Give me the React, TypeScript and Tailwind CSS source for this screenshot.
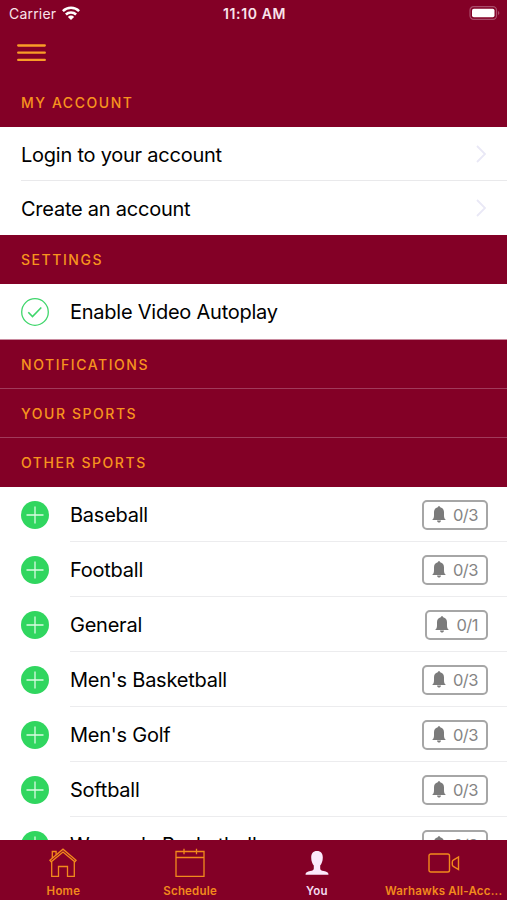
import type { ReactNode } from "react";

interface Sport {
  name: string;
  alerts: string;
}

const sports: Sport[] = [
  { name: "Baseball", alerts: "0/3" },
  { name: "Football", alerts: "0/3" },
  { name: "General", alerts: "0/1" },
  { name: "Men's Basketball", alerts: "0/3" },
  { name: "Men's Golf", alerts: "0/3" },
  { name: "Softball", alerts: "0/3" },
  { name: "Women's Basketball", alerts: "0/3" },
];

export default function App() {
  return (
    <div className="flex h-[900px] w-[507px] flex-col overflow-hidden bg-[#830026] font-['Inter','Liberation_Sans',sans-serif] text-black">
      <StatusBar />

      <header className="flex h-[51px] shrink-0 items-start pl-[17px] pt-[17px]">
        <button aria-label="Menu">
          <svg width="29" height="18" viewBox="0 0 29 18" fill="none" stroke="#f99d27" strokeWidth="2.3" strokeLinecap="round">
            <path d="M1.200 1.500h26.600M1.200 8.700h26.600M1.200 15.900h26.600" />
          </svg>
        </button>
      </header>

      <main className="min-h-0 flex-1 overflow-hidden">
        <SectionTitle>MY ACCOUNT</SectionTitle>
        <AccountRow label="Login to your account" divider />
        <AccountRow label="Create an account" />

        <SectionTitle>SETTINGS</SectionTitle>
        <div className="flex h-[56px] items-center border-b border-[#c98a9e] bg-white pl-[21px]">
          <CheckIcon />
          <span className="ml-[21px] pt-px text-[20px] tracking-[-0.24px]">Enable Video Autoplay</span>
        </div>

        <SectionTitle line>NOTIFICATIONS</SectionTitle>
        <SectionTitle line>YOUR SPORTS</SectionTitle>
        <SectionTitle>OTHER SPORTS</SectionTitle>
        {sports.map((sport) => (
          <SportRow key={sport.name} sport={sport} />
        ))}
      </main>

      <nav className="grid h-[60px] shrink-0 grid-cols-4 bg-[#830026]">
        <Tab label="Home" icon={<HomeIcon />} />
        <Tab label="Schedule" icon={<CalendarIcon />} />
        <Tab label="You" icon={<PersonIcon />} active />
        <Tab label="Warhawks All-Acc..." icon={<VideoIcon />} />
      </nav>
    </div>
  );
}

function StatusBar() {
  return (
    <div className="grid h-[27px] shrink-0 grid-cols-3 items-center pl-[9px] pr-[7px] text-[14px] text-[#f9e3ea]">
      <div className="flex items-center gap-[6px]">
        <span className="tracking-[0.2px]">Carrier</span>
        <svg className="-mt-[2px]" width="18" height="14" viewBox="0 0 18 14" fill="none" stroke="#fff" strokeWidth="2.5">
          <path d="M.9 5.100a11.400 11.400 0 0 1 16.200 0" />
          <path d="M3.900 8.500a7.200 7.200 0 0 1 10.200 0" />
          <path d="M9 13.900 5.900 10.900a4.200 4.200 0 0 1 6.200 0z" fill="#fff" stroke="none" />
        </svg>
      </div>
      <span className="text-center font-semibold tracking-[0.6px]">11:10 AM</span>
      <svg className="-mt-px justify-self-end" width="31" height="14" viewBox="0 0 31 14">
        <rect x="1" y=".7" width="26.5" height="12.6" rx="3.6" fill="none" stroke="#a94c6b" strokeWidth="1.2" />
        <rect x="3" y="2.700" width="22.500" height="8.600" rx="1.800" fill="#fff" />
        <path d="M29 5v4c1.800-.7 1.800-3.300 0-4z" fill="#a94c6b" />
      </svg>
    </div>
  );
}

function SectionTitle({ children, line }: { children: ReactNode; line?: boolean }) {
  return (
    <h2
      className={`flex h-[49px] items-center border-b pl-[21px] pt-px text-[14px] font-medium tracking-[1.55px] text-[#f7941e] ${
        line ? "border-[#a13a5b]" : "border-[#830026]"
      }`}
    >
      {children}
    </h2>
  );
}

function AccountRow({ label, divider }: { label: string; divider?: boolean }) {
  return (
    <div className="bg-white pl-[21px]">
      <div
        className={`flex h-[54px] items-center justify-between border-b pr-[21px] ${
          divider ? "border-[#e9e9eb]" : "border-white"
        }`}
      >
        <span className="pt-[2px] text-[20px] tracking-[-0.24px]">{label}</span>
        <svg width="10" height="18" viewBox="0 0 10 18" fill="none" stroke="#e9e8f6" strokeWidth="1.8">
          <path d="m1 1 8 8-8 8" />
        </svg>
      </div>
    </div>
  );
}

function SportRow({ sport }: { sport: Sport }) {
  return (
    <div className="flex h-[55px] items-center bg-white pl-[21px]">
      <svg className="mt-px" width="28" height="28" viewBox="0 0 28 28">
        <circle cx="14" cy="14" r="14" fill="#30d65f" />
        <path d="M5.500 14h17M14 5.500v17" stroke="#d9fbe2" strokeWidth="1.300" />
      </svg>
      <div className="ml-[21px] flex h-full flex-1 items-center justify-between border-b border-[#ececee] pr-[19px]">
        <span className="pt-[2px] text-[20px] tracking-[-0.24px]">{sport.name}</span>
        <span className="mt-px flex h-[30px] items-center gap-[7px] rounded-[5px] border-2 border-[#a6a6a6] px-[8px] text-[16.5px] tracking-[-0.5px] text-[#858585]">
          <BellIcon />
          <span className="pt-px">{sport.alerts}</span>
        </span>
      </div>
    </div>
  );
}

function Tab({ label, icon, active }: { label: string; icon: ReactNode; active?: boolean }) {
  return (
    <div
      className={`flex flex-col items-center pt-[7px] ${active ? "text-[#f3dcf0]" : "text-[#f28a1c]"}`}
    >
      <div className="flex h-[32px] items-center">{icon}</div>
      <span className="mt-[4px] whitespace-nowrap text-[11.5px] leading-[16px] font-semibold tracking-[0.2px]">
        {label}
      </span>
    </div>
  );
}

function CheckIcon() {
  return (
    <svg width="28" height="28" viewBox="0 0 28 28" fill="none" stroke="#3fd66b">
      <circle cx="14" cy="14" r="13.3" strokeWidth="1.3" />
      <path d="m7.300 14.200 4.200 4.300 8.800-9" strokeWidth="1.6" />
    </svg>
  );
}

function BellIcon() {
  return (
    <svg width="14" height="17" viewBox="0 0 14 17" fill="#7b7b7b">
      <path d="M7 .2c.8 0 1.200.5 1.200 1.100 2.500.6 3.800 2.400 3.800 4.900v3.200c0 2.300.6 3.300 2 4.600H0c1.400-1.300 2-2.300 2-4.600V6.200c0-2.500 1.300-4.300 3.800-4.900C5.800.7 6.200.2 7 .2z" />
      <path d="M5 14.500h4c-.2 1.400-1 2.100-2 2.100s-1.800-.7-2-2.100z" />
    </svg>
  );
}

function HomeIcon() {
  return (
    <svg width="28" height="30" viewBox="0 0 28 30" fill="none" stroke="currentColor" strokeWidth="1.3">
      <path d="M.9 12.300 14 1.200l13.100 11.100-1.300 1.500L14 4 2.200 13.800z" />
      <path d="M2.700 13.800v14.500h6.800v-9.800h9v9.800h6.800V13.800" />
      <path d="M3.300 9.900V3.500h3.800v3.200" />
    </svg>
  );
}

function CalendarIcon() {
  return (
    <svg width="30" height="30" viewBox="0 0 30 30" fill="none" stroke="currentColor" strokeWidth="1.300">
      <path d="M1 3.500h28v24.800H1zM1 9.500h28M9 .8v5.500M21.500.8v5.500" />
    </svg>
  );
}

function PersonIcon() {
  return (
    <svg width="24" height="24" viewBox="0 0 24 24" fill="#fbe9fb">
      <path d="M12 0c4 0 5.800 2.600 5.800 6.500 0 3.800-1.300 6.500-2.600 8v2.900c0 1.700 1.300 2.100 3.600 2.700 2.800.7 4.700 1.200 4.700 3.600H.5c0-2.400 1.900-2.900 4.700-3.600 2.300-.6 3.600-1 3.600-2.700v-2.900c-1.300-1.500-2.600-4.200-2.600-8C6.200 2.600 8 0 12 0z" />
    </svg>
  );
}

function VideoIcon() {
  return (
    <svg width="32" height="20" viewBox="0 0 32 20" fill="none" stroke="currentColor" strokeWidth="1.400">
      <rect x="1" y="1" width="20.500" height="18" rx="1.800" />
      <path d="M30.500 4v12.500l-5.200-3.200c-.8-.5-1-1-1-1.900V9c0-.9.200-1.400 1-1.900z" />
    </svg>
  );
}
